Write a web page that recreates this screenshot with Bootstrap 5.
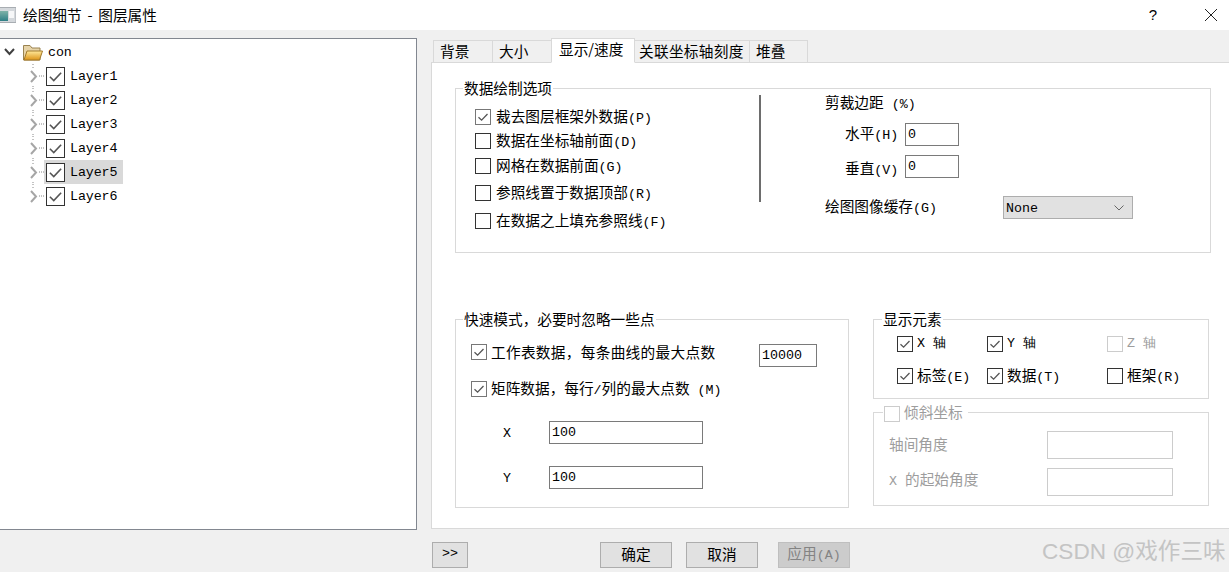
<!DOCTYPE html>
<html lang="zh"><head><meta charset="utf-8"><title>绘图细节 - 图层属性</title>
<link href="https://cdn.jsdelivr.net/npm/bootstrap@5.3.0/dist/css/bootstrap.min.css" rel="stylesheet">
<style>
html,body{margin:0;height:572px;overflow:hidden}
body{background:#f0f0f0;color:#000;font:14.67px/20px "Noto Sans CJK SC","Noto Sans",sans-serif;position:relative}
.lt{font-family:"Liberation Mono",monospace;font-size:13.33px}
.dim{color:#9d9d9d}
.titlebar{height:30px;background:#fff;padding-left:0}
.wintitle{word-spacing:2.5px}
.appicon{margin-right:7px;flex:none}
.winq{margin-left:auto;width:80px;font-size:15px;font-family:"Liberation Sans",sans-serif;padding-left:0}
.winx{width:36px}
.work{height:498px;padding-top:8px}
.treebox{width:418px;height:492px;margin-left:-1px;background:#fff;border:1px solid #828790;padding-top:1px;flex:none}
.treerow{height:24px}
.rootrow{padding-left:4px}
.rootrow .lab{margin-left:5px}
.folder{margin-left:8px}
.childrow{padding-left:29px}
.sel{width:79px;height:24px;padding-left:2px}
.sel.on{background:#d9d9d9}
.lab{margin-left:5px;letter-spacing:-.1px;padding-top:2px}
.rightcol{margin-left:14px;width:798px}
.tabbar{height:24px;border:0;padding-left:2px;align-items:flex-end;flex-wrap:nowrap}
.tabbar .nav-link{height:23px;margin:0 -1px -1px 0;padding:0 0 1px 6px;line-height:19px;border:1px solid #d9d9d9;border-radius:0;background:#f0f0f0;color:#000;position:relative}
.tabbar .nav-link.active{height:25px;line-height:20px;background:#fff;border-color:#d9d9d9 #d9d9d9 #fff;color:#000;z-index:1;padding-left:7px}
.tabA{width:60px}.tabB{width:60px}.tabC{width:84px}.tabD{width:116px;letter-spacing:.3px}.tabD{padding-left:4px!important}.tabE{width:59px}
.pane{height:467px;background:#fff;border:1px solid #d9d9d9;border-right:0;padding-left:23px}
fieldset.grp{border:1px solid #d9d9d9;position:relative;margin:0;min-width:0}
.grp>legend{float:none;width:auto;padding:0 1px;font-size:14.67px;line-height:20px;margin-bottom:0}
.g1>legend{margin-left:-12px}
.g2>legend{margin-left:-8px}
.g3>legend{margin-left:-15px}
.g4>legend{margin-left:-6px;padding:0 5px 0 1px;height:20px}
fieldset.grp.g1{width:756px;height:175px;margin-top:15px;padding:0 0 0 19px}
.g1left{width:284px}
.opt{height:16px}
.opt .txt{margin-left:5px}
.m11{margin-top:11px}.m8{margin-top:8px}.m9{margin-top:9px}.m12{margin-top:12px}
.vline{width:2px;height:107px;background:#6d6d6d;margin-top:-3px;flex:none}
.g1right{margin-left:64px;margin-top:-5px}
.clip1{height:20px;margin-top:-1px}
.clipr{height:23px;padding-left:20px;margin-top:11px}
.clipr2{margin-top:9px}
.cliplab{width:60px;position:relative}
.nudge{margin-top:5px}
.cacher{margin-top:18px;height:23px}
.cachelab{width:178px}
.lower{margin-top:56px}
.g2{width:394px;height:199px;padding:0 0 0 15px}
.g2row{height:23px}
.g2a{margin-top:15px}
.g2a .cap{letter-spacing:.3px;line-height:16px}
.g2in{margin-right:31px}
.g2b{margin-top:14px;height:16px}
.g2x{margin-top:24px;height:23px;padding-left:32px}
.g2y{margin-top:22px;height:23px;padding-left:32px}
.axlab{width:46px;padding-top:3px}
.side{margin-left:24px}
.g3{width:336px;height:90px;padding:0 0 0 23px}
.g3row{height:16px;margin-top:7px}
.g3row2{margin-top:16px}
.c1{width:90px}.c2{width:120px}
.g3 .txt{margin-left:4px}
fieldset.grp.g4{width:336px;height:104px;margin-top:3px;padding:0 0 0 15px}
.g4row{height:28px;margin-top:9px;width:285px}
.g4lab{width:158px;padding-bottom:3px}
.form-check-input.ck{width:16px;height:16px;margin:0;border:1px solid #333;border-radius:0;background-color:#fff;box-shadow:none;flex:none;opacity:1}
.form-check-input.ck:checked[type=checkbox]{background-color:#fff;border-color:#333;background-size:12px 12px;background-image:url("data:image/svg+xml,%3csvg xmlns='http://www.w3.org/2000/svg' viewBox='0 0 12 12'%3e%3cpath d='M1.5 6.2 4.6 9.2 10.5 3' fill='none' stroke='%23555' stroke-width='1.3'/%3e%3c/svg%3e")}
.form-check-input.ck.big{width:19px;height:19px}
.form-check-input.ck.big:checked[type=checkbox]{background-size:15px 15px}
.form-check-input.ck.soft:checked[type=checkbox]{border-color:#777}
.form-check-input.ck:disabled{opacity:1;border-color:#ccc;background-color:#fff}
.form-control.fld{border:1px solid #7a7a7a;border-radius:0;padding:0 2px 0 2px;height:23px;min-height:0;font:13.33px/20px "Liberation Mono",monospace;color:#000;box-shadow:none;background:#fff}
.form-control.fld:disabled{border-color:#ccc;background:#fff;height:28px}
.w54{width:54px}.w58{width:58px}.w154{width:154px}.w126{width:126px}
.form-select.drop{width:130px;height:23px;min-height:0;border:1px solid #adadad;border-radius:0;padding:2px 0 0 2px;background-color:#e1e1e1;font:13.33px/20px "Liberation Mono",monospace;color:#000;background-size:10px 6px;background-position:right 8px center;box-shadow:none;background-image:url("data:image/svg+xml,%3csvg xmlns='http://www.w3.org/2000/svg' viewBox='0 0 10 6'%3e%3cpath d='M.5.5 5 5 9.5.5' fill='none' stroke='%23666'/%3e%3c/svg%3e")}
.foot{height:44px;padding:14px 0 0 432px}
.btn.dlg{height:26px;width:72px;padding:0 0 2px;border:1px solid #adadad;border-radius:0;background:#e1e1e1;color:#000;font-size:14.67px;line-height:20px;flex:none}
.btn.dlg:disabled{opacity:1;background:#ccc;border-color:#bfbfbf;color:#838383}
.btn.more{width:36px;margin-right:132px;font:13.33px/20px "Liberation Mono",monospace}
.gapa{margin-right:14px}.gapb{margin-right:20px}
.mark-w{position:absolute;left:1042px;top:538px;font:22.6px/28px "Liberation Sans","Noto Sans CJK SC",sans-serif;color:#c4c4c4;white-space:nowrap}
</style></head><body>
<div class="titlebar d-flex align-items-center">
<svg class="appicon" width="16" height="16" viewBox="0 0 16 16"><defs><linearGradient id="tg" x1="0" y1="0" x2="0" y2="1"><stop offset="0" stop-color="#7fb2a8"/><stop offset="1" stop-color="#2f7f86"/></linearGradient></defs><rect x="-1" y="0.500" width="17" height="15" fill="#d4d8dc" stroke="#a8adb2"/><rect x="0" y="4" width="8" height="10" fill="url(#tg)"/><rect x="9" y="4" width="5" height="7" fill="#f6f7f8"/></svg>
<span class="wintitle">绘图细节 - 图层属性</span>
<span class="winq text-center">?</span>
<span class="winx d-flex justify-content-center"><svg width="14" height="14" viewBox="0 0 14 14"><path d="M1 1 13 13M13 1 1 13" stroke="#222" fill="none"/></svg></span>
</div>
<div class="work d-flex">
<div class="treebox">
<ul class="list-unstyled m-0">
<li class="treerow rootrow d-flex align-items-center"><svg width="11" height="8" viewBox="0 0 11 8"><path d="M1 1 5.500 6 10 1" fill="none" stroke="#404040" stroke-width="2"/></svg>
<svg class="folder" width="20" height="17" viewBox="0 0 20 17"><defs><linearGradient id="fg" x1="0" y1="0" x2="0" y2="1"><stop offset="0" stop-color="#ffe99a"/><stop offset="1" stop-color="#dd9418"/></linearGradient></defs><path d="M0.500 16V1.500H7L9 4H17V16Z" fill="#e6d3a8" stroke="#9a8350"/><path d="M1 16 4 7H19.500L16.500 16Z" fill="url(#fg)" stroke="#a37a2c"/></svg>
<span class="lab lt">con</span></li>
<li class="treerow childrow d-flex align-items-center"><svg width="15" height="24" viewBox="0 0 15 24"><path d="M2 7 7 12.500 2 18" fill="none" stroke="#a6a6a6" stroke-width="2"/><path d="M4 0V1M4 3V4M4 22V23M10 12H15" stroke="#888" stroke-dasharray="1 1" fill="none"/></svg><span class="sel d-flex align-items-center"><input class="form-check-input ck big" type="checkbox" checked aria-label="Layer1"><span class="lab lt">Layer1</span></span></li>
<li class="treerow childrow d-flex align-items-center"><svg width="15" height="24" viewBox="0 0 15 24"><path d="M2 7 7 12.500 2 18" fill="none" stroke="#a6a6a6" stroke-width="2"/><path d="M4 0V1M4 3V4M4 22V23M10 12H15" stroke="#888" stroke-dasharray="1 1" fill="none"/></svg><span class="sel d-flex align-items-center"><input class="form-check-input ck big" type="checkbox" checked aria-label="Layer2"><span class="lab lt">Layer2</span></span></li>
<li class="treerow childrow d-flex align-items-center"><svg width="15" height="24" viewBox="0 0 15 24"><path d="M2 7 7 12.500 2 18" fill="none" stroke="#a6a6a6" stroke-width="2"/><path d="M4 0V1M4 3V4M4 22V23M10 12H15" stroke="#888" stroke-dasharray="1 1" fill="none"/></svg><span class="sel d-flex align-items-center"><input class="form-check-input ck big" type="checkbox" checked aria-label="Layer3"><span class="lab lt">Layer3</span></span></li>
<li class="treerow childrow d-flex align-items-center"><svg width="15" height="24" viewBox="0 0 15 24"><path d="M2 7 7 12.500 2 18" fill="none" stroke="#a6a6a6" stroke-width="2"/><path d="M4 0V1M4 3V4M4 22V23M10 12H15" stroke="#888" stroke-dasharray="1 1" fill="none"/></svg><span class="sel d-flex align-items-center"><input class="form-check-input ck big" type="checkbox" checked aria-label="Layer4"><span class="lab lt">Layer4</span></span></li>
<li class="treerow childrow d-flex align-items-center"><svg width="15" height="24" viewBox="0 0 15 24"><path d="M2 7 7 12.500 2 18" fill="none" stroke="#a6a6a6" stroke-width="2"/><path d="M4 0V1M4 3V4M4 22V23M10 12H15" stroke="#888" stroke-dasharray="1 1" fill="none"/></svg><span class="sel on d-flex align-items-center"><input class="form-check-input ck big" type="checkbox" checked aria-label="Layer5"><span class="lab lt">Layer5</span></span></li>
<li class="treerow childrow d-flex align-items-center"><svg width="15" height="24" viewBox="0 0 15 24"><path d="M2 7 7 12.500 2 18" fill="none" stroke="#a6a6a6" stroke-width="2"/><path d="M4 0V1M4 3V4M10 12H15" stroke="#888" stroke-dasharray="1 1" fill="none"/></svg><span class="sel d-flex align-items-center"><input class="form-check-input ck big" type="checkbox" checked aria-label="Layer6"><span class="lab lt">Layer6</span></span></li>
</ul>
</div>
<div class="rightcol">
<ul class="nav nav-tabs tabbar">
<li class="nav-item"><a class="nav-link tabA" href="#">背景</a></li>
<li class="nav-item"><a class="nav-link tabB" href="#">大小</a></li>
<li class="nav-item"><a class="nav-link tabC active" href="#">显示/速度</a></li>
<li class="nav-item"><a class="nav-link tabD" href="#">关联坐标轴刻度</a></li>
<li class="nav-item"><a class="nav-link tabE" href="#">堆叠</a></li>
</ul>
<div class="pane">
<fieldset class="grp g1">
<legend>数据绘制选项</legend>
<div class="d-flex">
<div class="g1left">
<div class="opt d-flex align-items-center m11"><input class="form-check-input ck soft" type="checkbox" checked aria-label="P"><span class="txt">裁去图层框架外数据<span class="lt">(P)</span></span></div>
<div class="opt d-flex align-items-center m8"><input class="form-check-input ck" type="checkbox" aria-label="D"><span class="txt">数据在坐标轴前面<span class="lt">(D)</span></span></div>
<div class="opt d-flex align-items-center m9"><input class="form-check-input ck" type="checkbox" aria-label="G"><span class="txt">网格在数据前面<span class="lt">(G)</span></span></div>
<div class="opt d-flex align-items-center m11"><input class="form-check-input ck" type="checkbox" aria-label="R"><span class="txt">参照线置于数据顶部<span class="lt">(R)</span></span></div>
<div class="opt d-flex align-items-center m12"><input class="form-check-input ck" type="checkbox" aria-label="F"><span class="txt">在数据之上填充参照线<span class="lt">(F)</span></span></div>
</div>
<div class="vline"></div>
<div class="g1right">
<div class="clip1">剪裁边距<span class="lt"> (%)</span></div>
<div class="clipr d-flex align-items-center"><span class="cliplab">水平<span class="lt">(H)</span></span><input class="form-control fld w54" value="0" aria-label="水平"></div>
<div class="clipr clipr2 d-flex align-items-center"><span class="cliplab nudge">垂直<span class="lt">(V)</span></span><input class="form-control fld w54" value="0" aria-label="垂直"></div>
<div class="cacher d-flex align-items-center"><span class="cachelab">绘图图像缓存<span class="lt">(G)</span></span><select class="form-select drop" aria-label="缓存"><option>None</option></select></div>
</div>
</div>
</fieldset>
<div class="lower d-flex align-items-start">
<fieldset class="grp g2">
<legend>快速模式，必要时忽略一些点</legend>
<div class="g2row g2a d-flex align-items-start justify-content-between"><span class="d-flex"><input class="form-check-input ck soft" type="checkbox" checked aria-label="工作表"><span class="cap ms-1">工作表数据，每条曲线的最大点数</span></span><input class="form-control fld w58 g2in" value="10000" aria-label="最大点数"></div>
<div class="g2b d-flex align-items-center"><input class="form-check-input ck soft" type="checkbox" checked aria-label="矩阵"><span class="ms-1">矩阵数据，每行<span class="lt">/</span>列的最大点数<span class="lt"> (M)</span></span></div>
<div class="g2x d-flex align-items-center"><span class="axlab lt">X</span><input class="form-control fld w154" value="100" aria-label="X"></div>
<div class="g2y d-flex align-items-center"><span class="axlab lt">Y</span><input class="form-control fld w154" value="100" aria-label="Y"></div>
</fieldset>
<div class="side">
<fieldset class="grp g3">
<legend>显示元素</legend>
<div class="g3row d-flex align-items-center"><span class="c1 d-flex align-items-center"><input class="form-check-input ck" type="checkbox" checked aria-label="X"><span class="txt lt">X 轴</span></span><span class="c2 d-flex align-items-center"><input class="form-check-input ck" type="checkbox" checked aria-label="Y"><span class="txt lt">Y 轴</span></span><span class="d-flex align-items-center dim"><input class="form-check-input ck" type="checkbox" disabled aria-label="Z"><span class="txt lt">Z 轴</span></span></div>
<div class="g3row g3row2 d-flex align-items-center"><span class="c1 d-flex align-items-center"><input class="form-check-input ck" type="checkbox" checked aria-label="E"><span class="txt">标签<span class="lt">(E)</span></span></span><span class="c2 d-flex align-items-center"><input class="form-check-input ck" type="checkbox" checked aria-label="T"><span class="txt">数据<span class="lt">(T)</span></span></span><span class="d-flex align-items-center"><input class="form-check-input ck" type="checkbox" aria-label="R"><span class="txt">框架<span class="lt">(R)</span></span></span></div>
</fieldset>
<fieldset class="grp g4">
<legend class="d-flex align-items-end dim"><input class="form-check-input ck" type="checkbox" disabled aria-label="倾斜坐标"><span class="ms-1">倾斜坐标</span></legend>
<div class="g4row d-flex align-items-center dim"><span class="g4lab">轴间角度</span><input class="form-control fld w126" disabled aria-label="轴间角度"></div>
<div class="g4row d-flex align-items-center dim"><span class="g4lab"><span class="lt">X </span>的起始角度</span><input class="form-control fld w126" disabled aria-label="X 的起始角度"></div>
</fieldset>
</div>
</div>
</div>
</div>
</div>
<div class="foot d-flex">
<button class="btn dlg more" type="button">&gt;&gt;</button>
<button class="btn dlg gapa" type="button">确定</button>
<button class="btn dlg gapb" type="button">取消</button>
<button class="btn dlg" type="button" disabled>应用<span class="lt">(A)</span></button>
</div>
<div class="mark-w">CSDN @戏作三味</div>
<script src="https://cdn.jsdelivr.net/npm/bootstrap@5.3.0/dist/js/bootstrap.bundle.min.js"></script>
</body></html>
